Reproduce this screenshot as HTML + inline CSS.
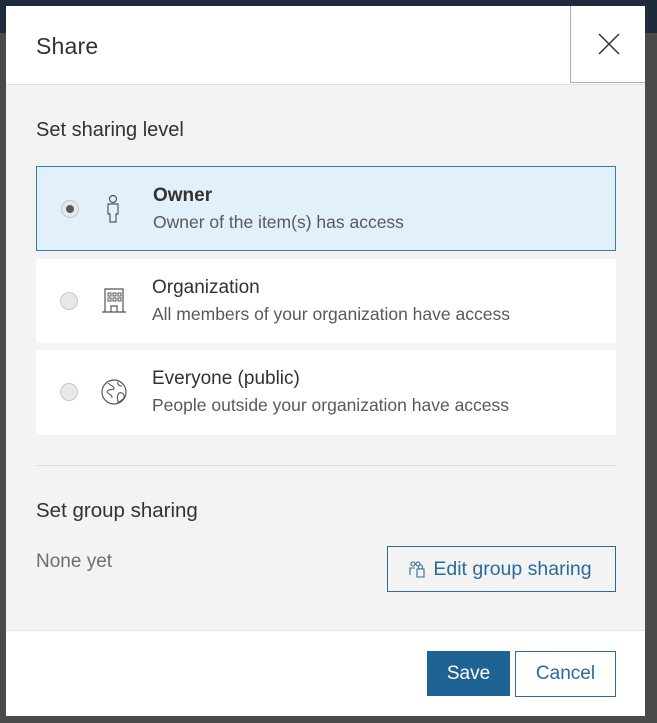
<!DOCTYPE html>
<html><head><style>
*{margin:0;padding:0;box-sizing:border-box}
body{width:657px;height:723px;background:#4a4a4a;position:relative;overflow:hidden;font-family:"Liberation Sans",sans-serif;color:#323232}
.top{position:absolute;left:0;top:0;width:657px;height:33px;background:#1e2b3b}
.modal{position:absolute;left:6px;top:6px;width:639px;height:710px;background:#f3f3f3}
.hdr{position:absolute;left:0;top:0;width:639px;height:79px;background:#fff;border-bottom:1px solid #e0e0e0}
.hdr h1{position:absolute;left:30px;top:27px;font-size:23px;font-weight:normal;color:#323232;letter-spacing:0.2px}
.close{position:absolute;left:564px;top:0;width:75px;height:77px;background:#fff;border-left:1px solid #8fb4dc;border-bottom:1px solid #8fb4dc}
.lbl{position:absolute;left:30px;font-size:20px;color:#323232}
.card{position:absolute;left:30px;width:580px;height:85px;background:#fff}
.card.sel{background:#e2f0f9;border:1px solid #2f7bbd}
.radio{position:absolute;left:24px;top:33px;width:18px;height:18px;border-radius:50%;background:#e8e8e8;border:1px solid #c8c8c8}
.sel .radio .dot{position:absolute;left:4px;top:4px;width:8px;height:8px;border-radius:50%;background:#595959}
.ic{position:absolute;left:64px;top:27px}
.t1{position:absolute;left:116px;top:18px;font-size:19px;color:#323232}
.t2{position:absolute;left:116px;top:45px;font-size:17.5px;color:#595959}
.foot{position:absolute;left:0;top:624px;width:639px;height:86px;background:#fff;border-top:1px solid #e6e6e6}
.btn{position:absolute;font-size:19px;text-align:center}
</style></head><body>
<div class="top"></div>
<div class="modal">
 <div class="hdr"><h1>Share</h1>
  <div class="close"><svg width="75" height="77"><path d="M28 28L48 48M48 28L28 48" stroke="#333" stroke-width="1.5"/></svg></div>
 </div>
 <div class="lbl" style="top:113px">Set sharing level</div>
 <div class="card sel" style="top:160px;height:85px"><div class="radio"><div class="dot"></div></div>
  <svg class="ic" width="24" height="32"><circle cx="12" cy="5" r="3.5" fill="none" stroke="#555" stroke-width="1.2"/><path d="M7 10h10v10h-2v8h-6v-8h-2z" fill="none" stroke="#555" stroke-width="1.2"/></svg>
  <div class="t1" style="font-weight:bold">Owner</div><div class="t2">Owner of the item(s) has access</div></div>
 <div class="card" style="top:253px;height:84px"><div class="radio"></div>
  <svg class="ic" width="28" height="30"><path d="M5 3h18v23H5zM2 26h24M11 26v-6h6v6" fill="none" stroke="#555" stroke-width="1.2"/><path d="M8 7h3v3H8zM13 7h3v3h-3zM18 7h3v3h-3zM8 12h3v3H8zM13 12h3v3h-3zM18 12h3v3h-3z" fill="none" stroke="#555" stroke-width="1"/></svg>
  <div class="t1">Organization</div><div class="t2">All members of your organization have access</div></div>
 <div class="card" style="top:344px;height:85px"><div class="radio"></div>
  <svg class="ic" width="30" height="30"><circle cx="14" cy="15" r="12" fill="none" stroke="#555" stroke-width="1.2"/><path d="M8 6c2 3 6 2 6 6-3 1-6 0-7 3 2 3 5 2 5 6M18 5c-1 3 2 4 4 4M19 16c3-1 6 1 5 5-2 2-4 4-6 4 0-3-2-5 1-9z" fill="none" stroke="#555" stroke-width="1.1"/></svg>
  <div class="t1">Everyone (public)</div><div class="t2">People outside your organization have access</div></div>
 <div style="position:absolute;left:30px;top:459px;width:580px;height:1px;background:#dcdcdc"></div>
 <div class="lbl" style="top:493px;font-size:20.5px">Set group sharing</div>
 <div style="position:absolute;left:30px;top:545px;font-size:19px;color:#6e6e6e">None yet</div>
 <div class="btn" style="left:381px;top:540px;width:229px;height:46px;border:1px solid #2b6a9b;color:#2b6a9b;line-height:44px;padding-left:22px;font-size:19.5px">Edit group sharing
  <svg style="position:absolute;left:20px;top:13px" width="18" height="20"><circle cx="5" cy="4" r="2" fill="none" stroke="#2b6a9b" stroke-width="1.1"/><circle cx="10" cy="4" r="2" fill="none" stroke="#2b6a9b" stroke-width="1.1"/><path d="M2 15v-7h5M9 17v-8h7v8z" fill="none" stroke="#2b6a9b" stroke-width="1.1"/><circle cx="12.5" cy="7" r="2" fill="#fff" stroke="#2b6a9b" stroke-width="1.1"/></svg></div>
 <div class="foot">
  <div class="btn" style="left:421px;top:20px;width:83px;height:45px;background:#1f6395;color:#fff;line-height:45px">Save</div>
  <div class="btn" style="left:509px;top:20px;width:101px;height:46px;border:1px solid #2b6a9b;color:#2b6a9b;line-height:44px">Cancel</div>
 </div>
</div>
</body></html>
